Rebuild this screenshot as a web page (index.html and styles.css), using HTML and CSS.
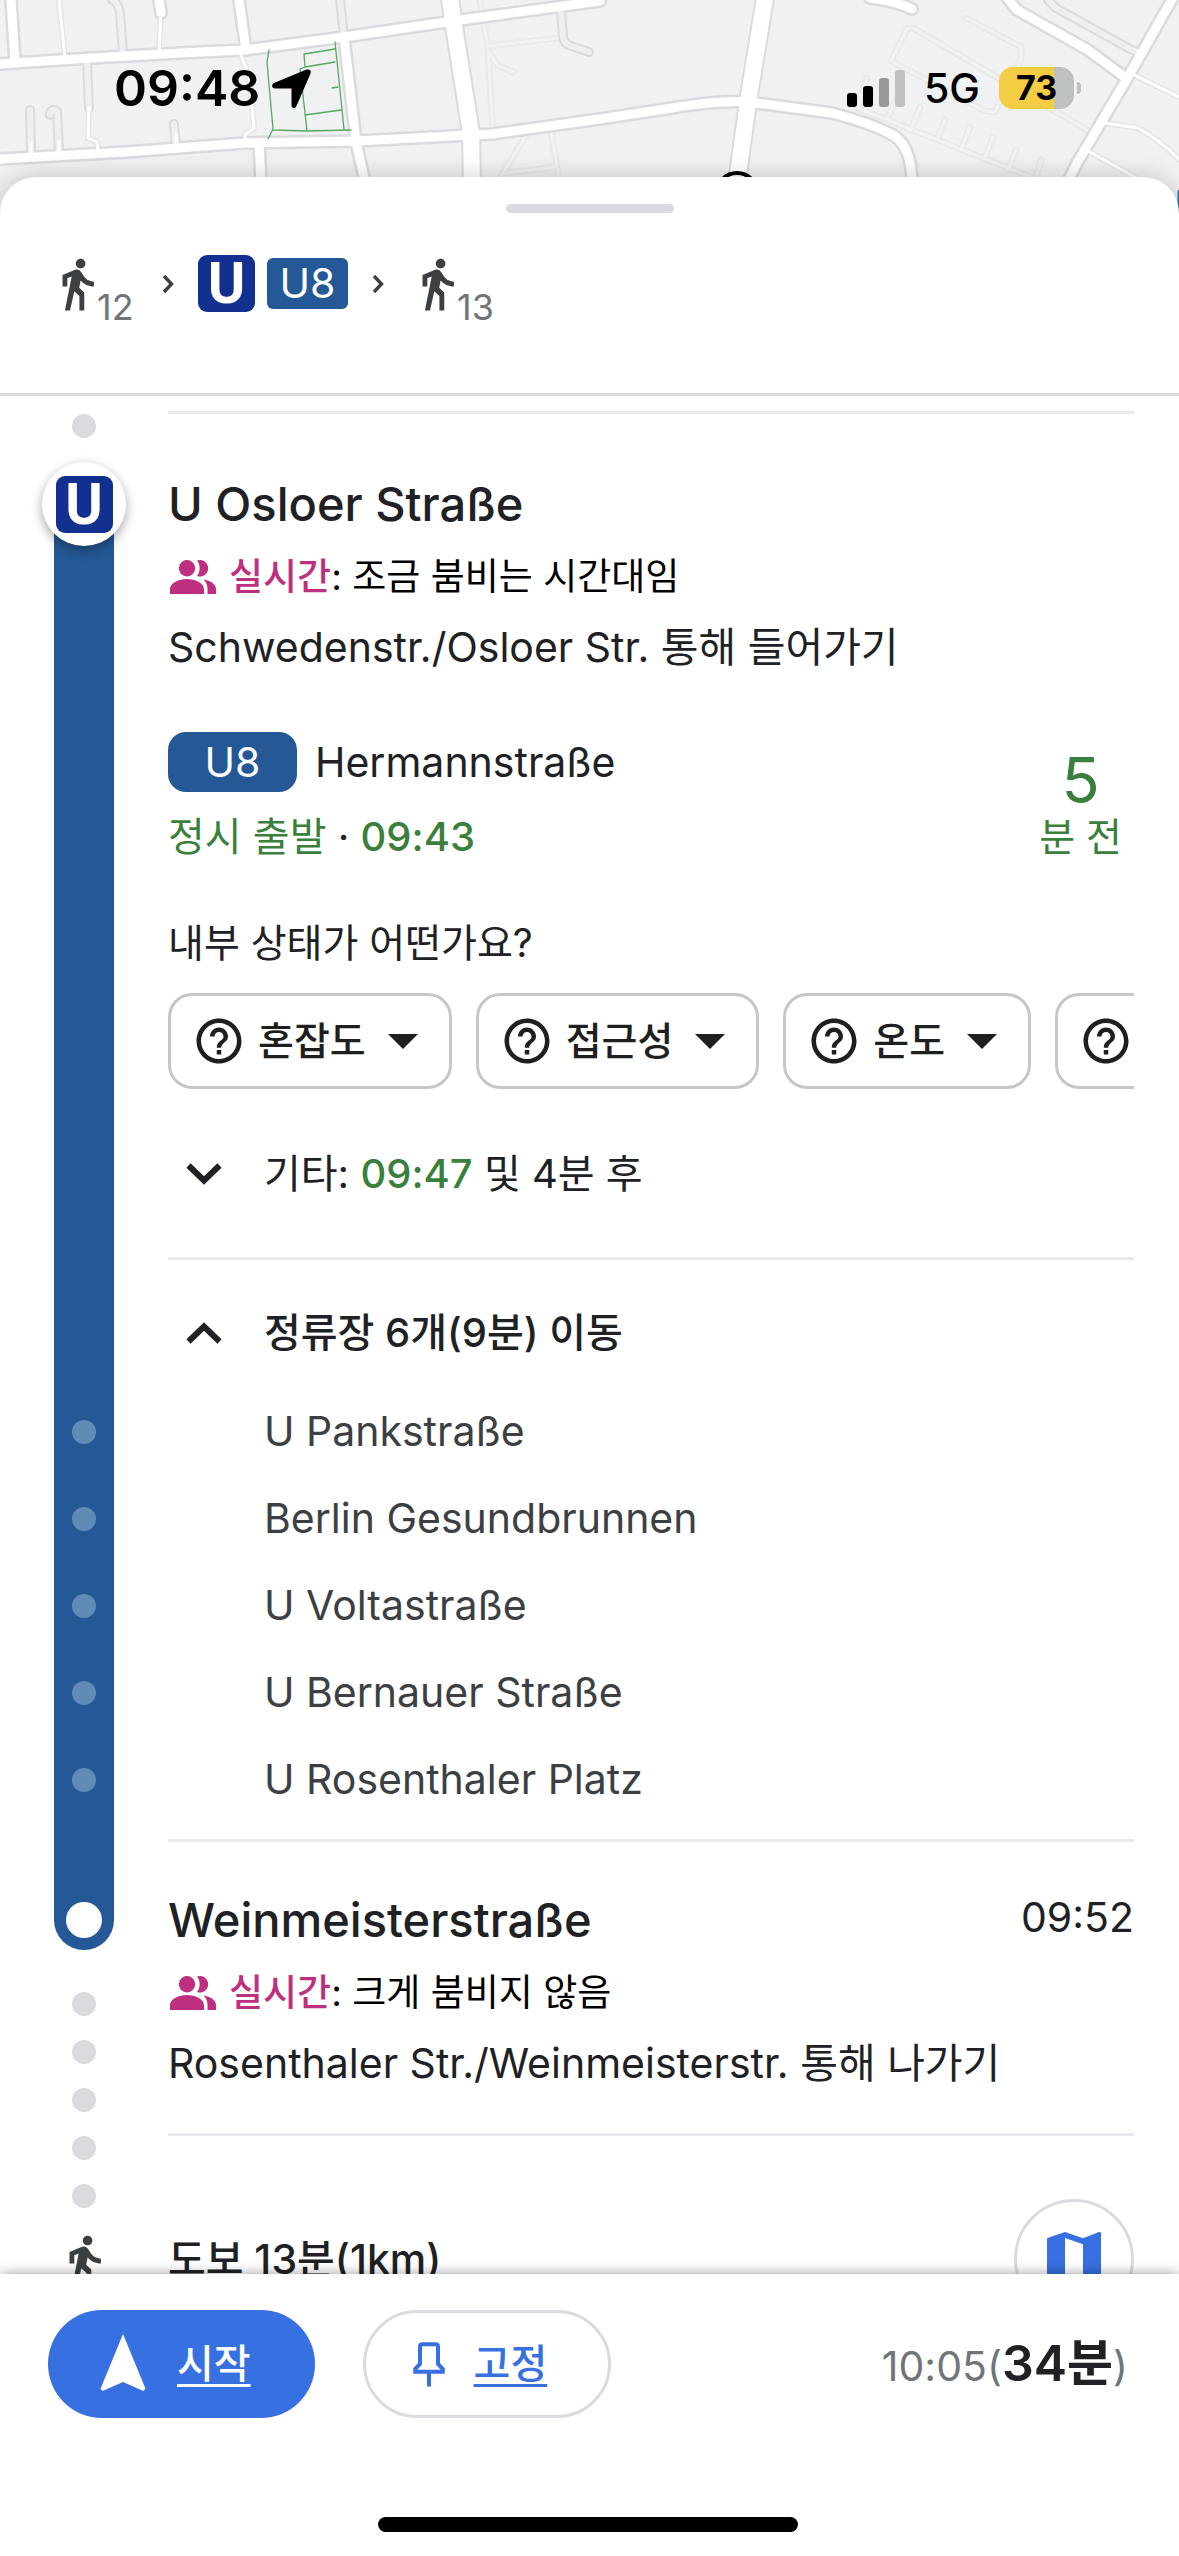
FILE: index.html
```html
<!DOCTYPE html>
<html lang="ko">
<head>
<meta charset="utf-8">
<meta name="viewport" content="width=device-width, initial-scale=1">
<title>U8 Hermannstraße</title>
<link rel="stylesheet" href="styles.css">
</head>
<body>
<svg class="symbols" aria-hidden="true">
  <symbol id="walk" viewBox="0 0 24 24"><path d="M13.5 5.5c1.1 0 2-.9 2-2s-.9-2-2-2-2 .9-2 2 .9 2 2 2zM9.8 8.9L7 23h2.1l1.8-8 2.1 2v6h2v-7.500l-2.100-2 .6-3C14.800 12 16.800 13 19 13v-2c-1.900 0-3.500-1-4.300-2.400l-1-1.600c-.4-.6-1-1-1.700-1-.3 0-.5.1-.8.1L6 8.300V13h2V9.600l1.800-.7"/></symbol>
  <symbol id="people" viewBox="0 0 46 34"><path d="M17 0a8.200 8.200 0 1 1 0 16.400A8.200 8.200 0 0 1 17 0zM0 34v-5c0-6 9-10 17-10s17 4 17 10v5zM27 .6A8.200 8.200 0 1 1 27 15.900C30.500 11.500 30.500 5 27 .6zM33.500 19.600C40 20.500 46 24 46 29v5h-8.500v-5c0-4-1.500-7-4-9.400z"/></symbol>
  <symbol id="help" viewBox="0 0 24 24"><path d="M11 18h2v-2h-2v2zm1-16C6.480 2 2 6.480 2 12s4.480 10 10 10 10-4.480 10-10S17.520 2 12 2zm0 18c-4.410 0-8-3.590-8-8s3.590-8 8-8 8 3.590 8 8-3.590 8-8 8zm0-14c-2.210 0-4 1.790-4 4h2c0-1.100.9-2 2-2s2 .9 2 2c0 2-3 1.750-3 5h2c0-2.250 3-2.500 3-5 0-2.210-1.790-4-4-4z"/></symbol>
  <symbol id="next" viewBox="0 0 12 20"><path d="M2 2l7.500 8L2 18" fill="none" stroke="currentColor" stroke-width="3.400"/></symbol>
  <symbol id="down" viewBox="0 0 36 24"><path d="M2.500 3.500L18 18.500l15.500-15" fill="none" stroke="currentColor" stroke-width="6"/></symbol>
</svg>

<div class="map">
  <svg class="map-art" viewBox="0 0 1179 213" preserveAspectRatio="xMidYMin slice" aria-hidden="true">
    <defs>
      <g id="faint">
        <path d="M480 0l8 48 5 86M488 46l71-8M488 50l9 15 16 7M528 132l-29 48M551 130l8 50M505 173l50-6M966 18l55 29v12l-26 53-10-1-94-50 16-32 6-1 179 105M867 78l-10 30 174 69M898 97l-10 20M920 107l-8 20M945 120l-7 17M970 127l-8 20M993 137l-8 20M1016 150l-8 20M1041 160l-5 18M900 128l-8 8"/>
      </g>
      <g id="lane">
        <path d="M111-2l6 6 3 8 3 42M340 0l4 37M561 10l2 27q1 7 8 9l18 6M1048 0l8 8 74 41 12 5M87 63l2 45M30 110l1 43M50 115q0-7 7-4l2 42M174 124l2 22"/>
      </g>
      <g id="small">
        <path d="M59 0l6 58M161 12l-2 40M89 108l-1 30 9 4 1 10M31 143v10M59 141v12M176 134v12M240 53l9 22 5 53-9 7v8M1134 75l45 22M1105 123l33 5q20 11 41 31M1090 152l48 27"/>
      </g>
      <g id="street">
        <path d="M11 0l4 62M159 0l2 13M239 0l7 50M344 37l12 105 9 40M259 143l2 40M870-2q25 3 42 11M1008-1l9 11 71 40 38 28M1174-4l-46 81-51 86-12 24M0 64q130-9 245-14l99-13 109-16 147-20M0 159l126-7 119-9 111-2 115-6 21-1 108-15 72-11q50-8 76-6l84 11q35 9 57 20 23 10 23 51"/>
      </g>
      <g id="avenue"><path d="M450-2l3 22 18 113 1 50M765-2l-17 104-11 80"/></g>
    </defs>
    <g fill="none" stroke-linecap="round" stroke-linejoin="round">
      <use href="#faint" stroke="#e8eaea" stroke-width="7"/>
      <use href="#faint" stroke="#f1f3f3" stroke-width="3"/>
      <use href="#lane" stroke="#dadbdf" stroke-width="10"/>
      <use href="#small" stroke="#e4e5e6" stroke-width="6"/>
      <use href="#street" stroke="#dadbdf" stroke-width="14"/>
      <use href="#avenue" stroke="#dadbdf" stroke-width="20"/>
      <use href="#lane" stroke="#eeeff1" stroke-width="6"/>
      <use href="#small" stroke="#fff" stroke-width="3"/>
      <use href="#street" stroke="#fff" stroke-width="9"/>
      <use href="#avenue" stroke="#fff" stroke-width="16"/>
      <path stroke="#55a860" stroke-width="1.300" d="M269 50l-2 12 6 67-5 10M273 130l34 1 44-1M335 42l9 87M335 49l-31 5 1 13 30-5M305 67l-5 2 7 62M305 115l36-5M332 88l6-1"/>
      <circle cx="737" cy="193" r="20" fill="#fff" stroke="#000" stroke-width="4"/>
      <path stroke="#2f6f9c" stroke-width="5" d="M1180 192v22"/>
    </g>
  </svg>
  <div class="status">
    <div class="status-left">
      <time>09:48</time>
      <svg class="locate" viewBox="0 0 39 39" aria-hidden="true"><path d="M38.500 4.500L24.500 37q-1.500 3-4 1.500-1-.8-1-2.500V19.500H3.500q-3 0-3.500-2.500 0-2 2-3L34.500.5Q37 0 38.500 1.500q.6 1.300 0 3z"/></svg>
    </div>
    <div class="status-right">
      <svg class="signal" viewBox="0 0 58 37" aria-hidden="true"><rect y="23" width="10" height="14" rx="3"/><rect x="16" y="16" width="10" height="21" rx="3"/><rect x="32" y="8" width="10" height="29" rx="3" fill="#98999b"/><rect x="48" width="10" height="37" rx="3" fill="#bfc0c1"/></svg>
      <span class="network">5G</span>
      <span class="battery">73</span>
    </div>
  </div>
</div>

<main class="sheet">
  <header class="summary">
    <div class="grabber"></div>
    <div class="legs">
      <span class="leg"><svg class="walk" aria-label="도보"><use href="#walk"/></svg><span class="minutes">12</span></span>
      <svg class="next" aria-hidden="true"><use href="#next"/></svg>
      <span class="leg leg-line"><span class="ubahn">U</span><span class="line-tag">U8</span></span>
      <svg class="next" aria-hidden="true"><use href="#next"/></svg>
      <span class="leg"><svg class="walk" aria-label="도보"><use href="#walk"/></svg><span class="minutes">13</span></span>
    </div>
  </header>

  <div class="steps">
    <div class="row">
      <div class="rail"></div>
      <div class="cell previous"></div>
    </div>

    <section class="row">
      <div class="rail">
        <i class="dot"></i>
        <span class="marker"><span class="ubahn">U</span></span>
        <div class="line"></div>
      </div>
      <div class="cell departure">
        <div class="station">
          <h2>U Osloer Straße</h2>
          <p class="crowd"><svg class="people" aria-hidden="true"><use href="#people"/></svg><span><b>실시간</b>: 조금 붐비는 시간대임</span></p>
          <p>Schwedenstr./Osloer Str. 통해 들어가기</p>
        </div>
        <div class="service">
          <div class="service-info">
            <div class="service-name"><span class="line-pill">U8</span><span>Hermannstraße</span></div>
            <p class="detail"><span class="green">정시 출발</span> · <time class="green strong">09:43</time></p>
          </div>
          <div class="countdown green"><span class="count">5</span><span>분 전</span></div>
        </div>
        <p class="question">내부 상태가 어떤가요?</p>
        <div class="chips">
          <button class="chip"><svg class="help" aria-hidden="true"><use href="#help"/></svg>혼잡도<i class="caret"></i></button>
          <button class="chip"><svg class="help" aria-hidden="true"><use href="#help"/></svg>접근성<i class="caret"></i></button>
          <button class="chip"><svg class="help" aria-hidden="true"><use href="#help"/></svg>온도<i class="caret"></i></button>
          <button class="chip"><svg class="help" aria-hidden="true"><use href="#help"/></svg><i class="caret"></i></button>
        </div>
        <button class="toggle"><svg class="arrow" aria-hidden="true"><use href="#down"/></svg><span>기타: <time class="green strong">09:47</time> 및 4분 후</span></button>
      </div>
    </section>

    <section>
      <div class="row">
        <div class="rail"><div class="line"></div></div>
        <button class="toggle toggle-open"><svg class="arrow arrow-up" aria-hidden="true"><use href="#down"/></svg><span>정류장 6개(9분) 이동</span></button>
      </div>
      <ul class="stops">
        <li class="row"><div class="rail"><div class="line"><i class="dot dot-stop"></i></div></div><span class="stop">U Pankstraße</span></li>
        <li class="row"><div class="rail"><div class="line"><i class="dot dot-stop"></i></div></div><span class="stop">Berlin Gesundbrunnen</span></li>
        <li class="row"><div class="rail"><div class="line"><i class="dot dot-stop"></i></div></div><span class="stop">U Voltastraße</span></li>
        <li class="row"><div class="rail"><div class="line"><i class="dot dot-stop"></i></div></div><span class="stop">U Bernauer Straße</span></li>
        <li class="row"><div class="rail"><div class="line"><i class="dot dot-stop"></i></div></div><span class="stop">U Rosenthaler Platz</span></li>
      </ul>
      <div class="row">
        <div class="rail"><div class="line"></div></div>
        <div class="cell stops-end"></div>
      </div>
    </section>

    <section class="row">
      <div class="rail rail-arrival">
        <div class="line line-end"><i class="stop-ring"></i></div>
        <i class="dot"></i><i class="dot"></i><i class="dot"></i>
      </div>
      <div class="cell arrival">
        <div class="station">
          <div class="station-head"><h2>Weinmeisterstraße</h2><time>09:52</time></div>
          <p class="crowd"><svg class="people" aria-hidden="true"><use href="#people"/></svg><span><b>실시간</b>: 크게 붐비지 않음</span></p>
          <p>Rosenthaler Str./Weinmeisterstr. 통해 나가기</p>
        </div>
      </div>
    </section>

    <section class="row">
      <div class="rail rail-walk">
        <i class="dot"></i><i class="dot"></i>
        <svg class="walk" aria-hidden="true"><use href="#walk"/></svg>
      </div>
      <div class="walking">
        <p class="strong">도보 13분(1km)</p>
        <button class="map-button" aria-label="지도"><svg viewBox="0 0 24 24" aria-hidden="true"><path d="M20.500 3l-.16.03L15 5.100 9 3 3.360 4.900c-.21.07-.36.25-.36.480V20.500c0 .28.22.5.5.5l.16-.03L9 18.900l6 2.100 5.640-1.900c.21-.07.36-.25.36-.480V3.500c0-.28-.22-.5-.5-.5zM15 19l-6-2.110V5l6 2.110V19z"/></svg></button>
      </div>
    </section>
  </div>

  <footer class="actions">
    <div class="actions-row">
      <button class="start"><svg viewBox="0 0 24 24" aria-hidden="true"><path d="M12 2L4.500 20.290l.71.71L12 18l6.790 3 .71-.71z"/></svg><span>시작</span></button>
      <button class="pin"><svg viewBox="0 0 32 45" aria-hidden="true"><path d="M7 4.500Q7 2.200 9.300 2.200h13.400Q25 2.200 25 4.500V22l4.800 5v2.800H2.200V27L7 22zM16 30v14.500"/></svg><span>고정</span></button>
      <p class="eta">10:05(<strong>34분</strong>)</p>
    </div>
    <div class="home"></div>
  </footer>
</main>
</body>
</html>
```
FILE: styles.css
```css
* {
  box-sizing: border-box;
}

body {
  margin: 0;
  height: 100vh;
  display: flex;
  flex-direction: column;
  overflow: hidden;
  background: #fff;
  color: #202124;
  font: 400 41px/54px Inter, "Noto Sans CJK KR", sans-serif;
  white-space: nowrap;
}

h2,
p,
ul {
  margin: 0;
  padding: 0;
}

button {
  margin: 0;
  padding: 0;
  border: 0;
  background: none;
  color: inherit;
  font: inherit;
}

svg {
  display: block;
  flex: none;
  fill: currentColor;
}

.symbols {
  position: absolute;
  width: 0;
  height: 0;
}

.strong {
  font-weight: 500;
}

.green {
  color: #3a7f3c;
}

/* Map strip and status bar */

.map {
  display: grid;
  flex: none;
  height: 213px;
  margin-bottom: -36px;
  background: #f0f1f3;
}

.map > * {
  grid-area: 1 / 1;
}

.map-art {
  width: 100%;
  height: 213px;
}

.status {
  display: flex;
  justify-content: space-between;
  align-items: center;
  height: 60px;
  margin: 58px 98px 0 114px;
  color: #000;
}

.status-left,
.status-right {
  display: flex;
  align-items: center;
}

.status-left {
  gap: 12px;
  font-size: 50px;
  font-weight: 600;
}

.locate {
  width: 39px;
  height: 39px;
}

.signal {
  width: 58px;
  height: 37px;
}

.network {
  margin: 0 19px;
  font-weight: 500;
}

.battery {
  position: relative;
  width: 75px;
  height: 42px;
  margin-right: 7px;
  border-radius: 14px;
  background: linear-gradient(90deg, #f5cd45 73%, #bfc0c0 73%);
  font-size: 34px;
  font-weight: 700;
  line-height: 42px;
  text-align: center;
}

.battery::after {
  content: "";
  position: absolute;
  top: 15px;
  right: -7px;
  width: 4px;
  height: 12px;
  border-radius: 0 4px 4px 0;
  background: #bfc0c0;
}

/* Sheet */

.sheet {
  position: relative;
  display: flex;
  flex: 1;
  flex-direction: column;
  min-height: 0;
  border-radius: 36px 36px 0 0;
  background: #fff;
  box-shadow: 0 0 24px rgba(0, 0, 0, 0.2);
}

.summary {
  flex: none;
  padding: 27px 48px 81px;
  border-bottom: 3px solid #dadbdf;
}

.grabber {
  width: 168px;
  height: 9px;
  margin: 0 auto 42px;
  border-radius: 5px;
  background: #dadbdf;
}

.legs,
.leg {
  display: flex;
  align-items: center;
}

.legs {
  gap: 24px;
  height: 57px;
}

.leg:first-child {
  min-width: 90px;
}

.leg-line {
  gap: 12px;
}

.walk {
  width: 58px;
  height: 58px;
  color: #3c4043;
}

.minutes {
  align-self: flex-end;
  margin: 0 0 -12px -9px;
  color: #70757a;
  font-size: 36px;
  line-height: 36px;
}

.next {
  width: 12px;
  height: 20px;
  color: #3c4043;
}

.ubahn {
  width: 57px;
  height: 57px;
  border-radius: 9px;
  background: #12308f;
  color: #fff;
  font: 700 57px/57px Roboto, sans-serif;
  text-align: center;
}

.line-tag,
.line-pill {
  background: #245896;
  color: #fff;
  text-align: center;
}

.line-tag {
  width: 81px;
  border-radius: 6px;
  line-height: 51px;
}

/* Steps: a rail on the left, details on the right */

.steps {
  flex: 1;
  min-height: 0;
  overflow: hidden auto;
  scrollbar-width: none;
}

.row {
  display: grid;
  grid-template-columns: 168px minmax(0, 1fr);
  padding-right: 45px;
}

.rail {
  display: flex;
  flex-direction: column;
  align-items: center;
}

.line {
  display: flex;
  flex: 1;
  flex-direction: column;
  align-items: center;
  justify-content: center;
  width: 60px;
  background: #245896;
}

.dot {
  flex: none;
  width: 24px;
  height: 24px;
  border-radius: 50%;
  background: #dadbdf;
}

.dot-stop {
  background: #5f8bb5;
}

.marker {
  z-index: 1;
  display: grid;
  place-items: center;
  width: 84px;
  height: 84px;
  margin: 24px 0 -42px;
  border-radius: 50%;
  background: #fff;
  box-shadow: 0 4px 12px rgba(0, 0, 0, 0.35);
}

.cell {
  border-bottom: 3px solid #e8e9ec;
}

.previous {
  height: 18px;
}

.departure {
  padding: 60px 0 56px;
}

.station {
  display: flex;
  flex-direction: column;
  gap: 19px;
}

.station-head {
  display: flex;
  align-items: flex-start;
  justify-content: space-between;
}

h2 {
  font-size: 47px;
  font-weight: 500;
  line-height: 60px;
}

.detail,
.toggle {
  font-size: 40px;
}

.crowd {
  display: flex;
  align-items: center;
  gap: 13px;
  color: #000;
  font-size: 37px;
  line-height: 48px;
}

.crowd b {
  color: #bf2f80;
  font-weight: 500;
}

.people {
  width: 46px;
  height: 34px;
  margin-left: 2px;
  color: #bf2f80;
}

.service {
  display: flex;
  align-items: flex-end;
  justify-content: space-between;
  margin: 58px 12px 52px 0;
}

.service-info {
  display: flex;
  flex-direction: column;
  gap: 18px;
}

.service-name {
  display: flex;
  align-items: center;
  gap: 18px;
}

.line-pill {
  width: 129px;
  border-radius: 18px;
  line-height: 60px;
}

.countdown {
  display: flex;
  flex-direction: column;
  align-items: center;
  font-size: 39px;
}

.count {
  font-size: 63px;
  line-height: 60px;
}

.question {
  font-size: 39px;
}

.chips {
  display: flex;
  gap: 24px;
  margin: 23px 0 58px;
  overflow: hidden;
}

.chip {
  display: flex;
  flex: none;
  align-items: center;
  height: 96px;
  padding: 0 31px 0 21px;
  border: 3px solid #c6c6c6;
  border-radius: 24px;
  color: #1f1f1f;
  font-size: 39px;
  font-weight: 500;
}

.help {
  width: 54px;
  height: 54px;
  margin-right: 12px;
}

.caret {
  margin-left: 22px;
  border: 15px solid transparent;
  border-top-color: currentColor;
  border-bottom: 0;
}

.toggle {
  display: flex;
  align-items: center;
  gap: 42px;
  padding-left: 18px;
}

.toggle-open {
  padding-top: 46px;
  padding-bottom: 28px;
  font-weight: 500;
}

.arrow {
  width: 36px;
  height: 24px;
}

.arrow-up {
  transform: rotate(180deg);
}

.stops {
  list-style: none;
}

.stop {
  padding-left: 96px;
  color: #3c4043;
  line-height: 87px;
}

.stops-end {
  height: 19px;
}

.rail-arrival {
  gap: 24px;
  padding-bottom: 24px;
}

.line-end {
  flex: none;
  justify-content: flex-end;
  height: 108px;
  margin-bottom: 18px;
  padding-bottom: 12px;
  border-radius: 0 0 30px 30px;
}

.stop-ring {
  width: 36px;
  height: 36px;
  border-radius: 50%;
  background: #fff;
}

.arrival {
  padding: 48px 0 43px;
}

.rail-walk {
  gap: 24px;
}

.walking {
  display: flex;
  align-items: center;
  justify-content: space-between;
  padding-top: 63px;
}

.map-button {
  display: grid;
  place-items: center;
  width: 120px;
  height: 120px;
  border: 3px solid #dadbdf;
  border-radius: 50%;
  color: #3770e0;
}

.map-button svg {
  width: 72px;
  height: 72px;
}

/* Bottom bar */

.actions {
  z-index: 1;
  flex: none;
  padding: 36px 51px 24px 48px;
  background: #fff;
  box-shadow: 0 0 12px rgba(0, 0, 0, 0.4);
}

.actions-row {
  display: flex;
  align-items: center;
  gap: 48px;
}

.start,
.pin {
  display: flex;
  align-items: center;
  height: 108px;
  border-radius: 54px;
  font-size: 40px;
  font-weight: 500;
  text-decoration: underline;
  text-decoration-thickness: 3px;
  text-underline-offset: 6px;
  text-decoration-skip-ink: none;
}

.start {
  gap: 18px;
  padding: 0 64px 0 39px;
  background: #3770e0;
  color: #fff;
}

.start svg {
  width: 72px;
  height: 72px;
}

.pin {
  gap: 29px;
  padding: 0 61px 0 47px;
  border: 3px solid #dadbdf;
  color: #3770e0;
}

.pin svg {
  width: 32px;
  height: 45px;
  fill: none;
  stroke: currentColor;
  stroke-width: 4;
}

.eta {
  margin-left: auto;
  color: #70757a;
}

.eta strong {
  color: #202124;
  font-size: 50px;
  font-weight: 600;
}

.home {
  width: 420px;
  height: 15px;
  margin: 99px auto 0;
  border-radius: 8px;
  background: #000;
}
```
